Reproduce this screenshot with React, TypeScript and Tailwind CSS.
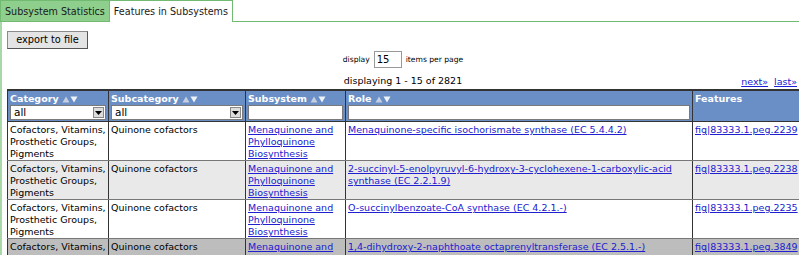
import React from "react";

const font = { fontFamily: '"DejaVu Sans", Verdana, sans-serif' };

function SortArrows() {
  return (
    <span className="ml-[3px] inline-flex items-center align-[-1px]">
      <svg width="8" height="7" viewBox="0 0 8 7"><polygon points="4,0.5 7.5,6.5 0.5,6.5" fill="#c4cfe2" /></svg>
      <svg width="8" height="7" viewBox="0 0 8 7"><polygon points="0.5,0.5 7.5,0.5 4,6.5" fill="#eef2fa" /></svg>
    </span>
  );
}

function FakeSelect() {
  return (
    <div className="flex h-[15px] items-center border border-[#7a7a7a] bg-white font-normal">
      <span className="flex-1 pl-[3px] text-[10.5px] leading-[13px] text-black">all</span>
      <span className="mr-[1px] flex h-[11px] w-[11px] items-center justify-center border border-[#888] bg-[#dcdcdc]">
        <svg width="7" height="4" viewBox="0 0 7 4"><polygon points="0,0 7,0 3.5,4" fill="#000" /></svg>
      </span>
    </div>
  );
}

function FakeInput() {
  return <div className="h-[15px] border border-[#7a7a7a] bg-white" />;
}

const rows = [
  {
    role: "Menaquinone-specific isochorismate synthase (EC 5.4.4.2)",
    fig: "fig|83333.1.peg.2239",
    bg: "bg-white",
  },
  {
    role: "2-succinyl-5-enolpyruvyl-6-hydroxy-3-cyclohexene-1-carboxylic-acid synthase (EC 2.2.1.9)",
    fig: "fig|83333.1.peg.2238",
    bg: "bg-[#e9e9e9]",
  },
  {
    role: "O-succinylbenzoate-CoA synthase (EC 4.2.1.-)",
    fig: "fig|83333.1.peg.2235",
    bg: "bg-white",
  },
  {
    role: "1,4-dihydroxy-2-naphthoate octaprenyltransferase (EC 2.5.1.-)",
    fig: "fig|83333.1.peg.3849",
    bg: "bg-[#bdbdbd]",
  },
];

const link = "text-[#2020d0] underline";
const td = "border border-x-[#333] border-y-[#777] px-[2px] pt-[2px] align-top leading-[12px]";

export default function App() {
  return (
    <div className="h-[255px] w-[799px] overflow-hidden bg-white text-[9.5px] leading-[13px] text-black" style={font}>
      {/* tabs */}
      <div className="flex h-[22px] items-stretch">
        <div className="flex items-center border border-[#72b972] bg-[#8ecf8e] px-[4px] text-[9.6px] text-[#1a1a1a]">
          Subsystem Statistics
        </div>
        <div className="flex items-center border border-b-0 border-l-0 border-[#72b972] bg-white px-[4px] text-[9.6px] text-[#1a1a1a]">
          Features in Subsystems
        </div>
        <div className="flex-1 border-b border-[#72b972]" />
      </div>
      <div className="border-l-2 border-[#a8d8a8] pl-[5px] pt-[9px]">
        <button className="h-[18px] w-[81px] border border-[#8a8a8a] border-b-[#555] border-r-[#555] bg-[#e4e4e4] text-[9.8px] leading-[14px] text-black" style={font}>
          export to file
        </button>
        <div className="mt-[2px] flex items-center justify-center gap-[4px] text-[7.6px]">
          <span>display</span>
          <div className="flex h-[17px] w-[28px] items-center border border-[#999] bg-white pl-[2px] text-[10px]">15</div>
          <span>items per page</span>
        </div>
        <div className="relative mt-[4px] h-[17px] text-center leading-[17px]">
          <span>displaying 1 - 15 of 2821</span>
          <div className="absolute right-[2px] top-[3px] flex gap-[6px] leading-[13px]">
            <span className={link}>next»</span>
            <span className={link}>last»</span>
          </div>
        </div>
        <table className="w-[792px] table-fixed border-collapse border-t-2 border-[#333]">
          <colgroup>
            <col className="w-[101px]" />
            <col className="w-[137px]" />
            <col className="w-[100px]" />
            <col className="w-[347px]" />
            <col className="w-[107px]" />
          </colgroup>
          <thead>
            <tr className="bg-[#6a8fc6] text-white">
              {["Category", "Subcategory", "Subsystem", "Role"].map((h, i) => (
                <th key={h} className="h-[29px] border border-[#333] px-[2px] pb-[1px] pt-[1px] text-left align-top font-bold">
                  <div className="h-[13px] leading-[13px]">
                    {h}
                    <SortArrows />
                  </div>
                  <div>{i < 2 ? <FakeSelect /> : <FakeInput />}</div>
                </th>
              ))}
              <th className="border border-[#333] px-[2px] pt-[1px] text-left align-top font-bold">Features</th>
            </tr>
          </thead>
          <tbody>
            {rows.map((r, i) => (
              <tr key={i} className={r.bg}>
                <td className={`h-[39px] ${td}`}>Cofactors, Vitamins, Prosthetic Groups, Pigments</td>
                <td className={td}>Quinone cofactors</td>
                <td className={td}>
                  <span className={link}>Menaquinone and Phylloquinone Biosynthesis</span>
                </td>
                <td className={td}>
                  <span className={link}>{r.role}</span>
                </td>
                <td className={`${td} whitespace-nowrap`}>
                  <span className={link}>{r.fig}</span>
                </td>
              </tr>
            ))}
          </tbody>
        </table>
      </div>
    </div>
  );
}
